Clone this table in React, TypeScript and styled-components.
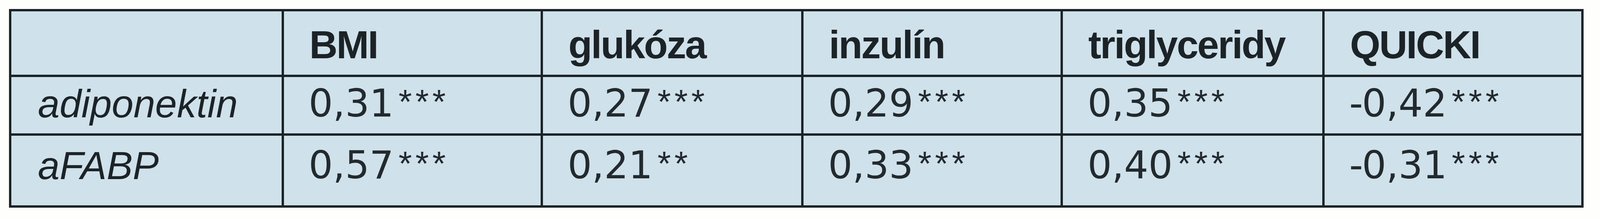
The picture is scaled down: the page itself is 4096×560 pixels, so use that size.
import styled, { createGlobalStyle } from "styled-components";

const GlobalStyle = createGlobalStyle`
    html, body {
        margin: 0;
        padding: 0;
        background: #fefefc;
    }
`;

const Page = styled.div`
    padding: 23px 0 0 23px;
`;

// the table lines are the grid background showing through the gaps
const Grid = styled.div`
    display: grid;
    grid-template-columns: 692px 657px 661px 658px 664px 657px;
    grid-template-rows: 162px 144px 178px;
    gap: 6px;
    padding: 6px;
    width: max-content;
    background: #1b2327;
`;

const Cell = styled.div<{ $padTop: number }>`
    background: #cfe1ea;
    padding-top: ${(p) => p.$padTop}px;
    line-height: 1;
    color: #1c2327;
    white-space: nowrap;
    overflow: hidden;
`;

const HeadCell = styled(Cell)`
    padding-left: 65px;
    font-family: "Liberation Sans", Arial, sans-serif;
    font-weight: 700;
    font-size: 100px;
    letter-spacing: -0.03em;
`;

const LabelCell = styled(Cell)`
    padding-left: 68px;
    font-family: "Liberation Sans", Arial, sans-serif;
    font-style: italic;
    font-size: 100px;
`;

const ValueCell = styled(Cell)`
    padding-left: 63px;
    font-family: "DejaVu Sans", "Liberation Sans", sans-serif;
    font-size: 98px;
    color: #222a2e;
`;

const Minus = styled.span`
    margin-right: -3px;
`;

const Stars = styled.span`
    font-family: "Liberation Sans", Arial, sans-serif;
    font-size: 88px;
    line-height: 0;
    letter-spacing: 9px;
    margin-left: 12px;
    vertical-align: 8px;
`;

const headers = ["BMI", "glukóza", "inzulín", "triglyceridy", "QUICKI"];

const rows = [
    { label: "adiponektin", values: ["0,31***", "0,27***", "0,29***", "0,35***", "-0,42***"] },
    { label: "aFABP", values: ["0,57***", "0,21**", "0,33***", "0,40***", "-0,31***"] },
];

const rowPad = [35, 18, 26];

const Value = ({ text }: { text: string }) => {
    const m = text.match(/^(-?)([\d,]+)(\**)$/);
    if (!m) return <>{text}</>;
    return (
        <>
            {m[1] && <Minus>-</Minus>}
            {m[2]}
            {m[3] && <Stars>{m[3]}</Stars>}
        </>
    );
};

const App = () => {
    return (
        <Page>
            <GlobalStyle />
            <Grid role="table">
                <HeadCell $padTop={rowPad[0]} role="columnheader"></HeadCell>
                {headers.map((h) => (
                    <HeadCell key={h} $padTop={rowPad[0]} role="columnheader">
                        {h}
                    </HeadCell>
                ))}

                {rows.map((r, i) => [
                    <LabelCell key={r.label} $padTop={rowPad[i + 1]} role="rowheader">
                        {r.label}
                    </LabelCell>,
                    ...r.values.map((v, j) => (
                        <ValueCell key={r.label + j} $padTop={rowPad[i + 1]} role="cell">
                            <Value text={v} />
                        </ValueCell>
                    )),
                ])}
            </Grid>
        </Page>
    );
};

export default App;
